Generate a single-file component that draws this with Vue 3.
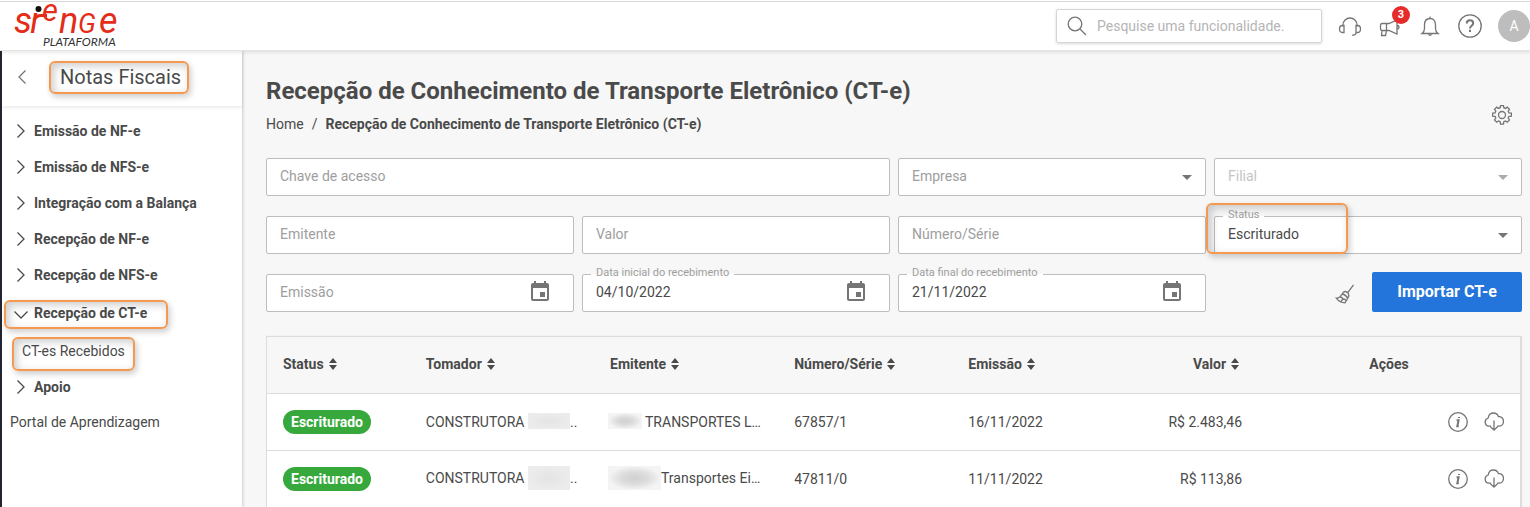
<template>
  <div class="app">
    <header class="topbar">
      <a href="#" class="logo" aria-label="Sienge Plataforma">
        <svg width="104" height="44" viewBox="0 0 104 44">
          <text class="logo-name" y="29"><tspan x="-1">s</tspan><tspan x="15">ı</tspan><tspan x="27" y="17" class="logo-raised">e</tspan><tspan x="44" y="29">n</tspan><tspan x="63" class="logo-cap">G</tspan><tspan x="84">e</tspan></text>
          <path class="logo-link" d="M19 16c1.500-3 3.500-4.500 7-4.500h6" />
          <circle cx="23.500" cy="5" r="3" fill="#111" />
          <text class="logo-sub" x="28" y="42">PLATAFORMA</text>
        </svg>
      </a>

      <div class="topbar-tools">
        <label class="search">
          <svg width="20" height="20" viewBox="0 0 20 20" class="line">
            <circle cx="8" cy="8" r="6.800" />
            <path d="M13 13l6 6" />
          </svg>
          <input type="text" placeholder="Pesquise uma funcionalidade." aria-label="Pesquise uma funcionalidade">
        </label>
        <button type="button" class="icon-btn" aria-label="Suporte">
          <svg width="24" height="24" viewBox="0 0 24 24" class="line">
            <path d="M5 12.500V11a7 7 0 0 1 14 0V12.500" />
            <path d="M6 11.500v7H4.500c-2 0-3-1.300-3-3.500s1-3.500 3-3.500zM18 11.500v7h1.500c2 0 3-1.300 3-3.500s-1-3.500-3-3.500zM18 18.500c0 2-1.300 2.700-4 2.700" />
          </svg>
        </button>
        <button type="button" class="icon-btn" aria-label="Novidades">
          <svg width="24" height="24" viewBox="0 0 24 24" class="line">
            <path d="M4.500 9.500h6.500l8-3.500v14l-8-3.500H4.500c-2 0-2-1-2-3.500s0-3.500 2-3.500zM8.500 9.500v7M19 11.500c2.600 0 2.600 3.500 0 3.500M4 16.500L3.500 21.500h4L8.500 16.500" />
          </svg>
          <span class="badge">3</span>
        </button>
        <button type="button" class="icon-btn" aria-label="Notificações">
          <svg width="24" height="24" viewBox="0 0 24 24" class="line">
            <path d="M4 19.500h16c-1.600-1.200-2.500-2.500-2.500-5v-3.500c0-4-2-6.500-5.500-6.500s-5.500 2.500-5.500 6.500v3.500c0 2.500-.9 3.800-2.500 5zM12 2.500v2M10.500 20.500c.6 1.100 2.400 1.100 3 0" />
          </svg>
        </button>
        <button type="button" class="icon-btn" aria-label="Ajuda">
          <svg width="24" height="24" viewBox="0 0 24 24" class="line">
            <circle cx="12" cy="12" r="11.200" />
            <path class="thick" d="M8.800 9.500c0-2 1.300-3.200 3.200-3.200s3.200 1.200 3.200 2.900c0 2.500-3.200 2.500-3.200 5.200M12 15.800v2.200" />
          </svg>
        </button>
        <button type="button" class="avatar">A</button>
      </div>
    </header>

    <div class="body">
      <aside class="sidebar">
        <div class="sidebar-head">
          <button type="button" class="back" aria-label="Voltar">
            <svg width="8" height="14" viewBox="0 0 8 14" class="line"><path d="M7.500 .5L1 7l6.500 6.500" /></svg>
          </button>
          <h2 class="marked marked-title">Notas Fiscais</h2>
        </div>
        <nav>
          <ul class="menu">
            <li v-for="item in menu" :key="item.label">
              <button type="button" class="menu-item" :class="{ 'marked marked-group': item.children }">
                <svg v-if="item.children" class="line chevron open" width="14" height="8" viewBox="0 0 14 8"><path d="M.5 .5L7 7L13.500 .5" /></svg>
                <svg v-else class="line chevron" width="8" height="14" viewBox="0 0 8 14"><path d="M.5 .5L7 7L.5 13.500" /></svg>
                {{ item.label }}
              </button>
              <a v-for="child in item.children" :key="child" href="#" class="submenu-item marked marked-child">{{ child }}</a>
            </li>
            <li><a href="#" class="menu-link">Portal de Aprendizagem</a></li>
          </ul>
        </nav>
      </aside>

      <main class="content">
        <div class="page-head">
          <div>
            <h1>Recepção de Conhecimento de Transporte Eletrônico (CT-e)</h1>
            <div class="breadcrumb">
              <a href="#">Home</a>
              <span>/</span>
              <strong>Recepção de Conhecimento de Transporte Eletrônico (CT-e)</strong>
            </div>
          </div>
          <button type="button" class="icon-btn gear" aria-label="Configurações">
            <svg width="20" height="20" viewBox="0 0 20 20" class="line">
              <circle cx="10" cy="10" r="3.500" />
              <path d="M8.200 2.700L8.500 .6h3l.3 2.100 1.700 .7 1.800-1.300 2.200 2.200-1.300 1.800 .7 1.700 2.500 .3v3l-2.500 .3-.7 1.700 1.300 1.900-2.200 2.200-1.800-1.300-1.700 .7-.3 2.500h-3l-.3-2.500-1.700-.7-1.800 1.300-2.200-2.200 1.300-1.900-.7-1.700-2.500-.3v-3l2.500-.3 .7-1.700-1.300-1.800 2.200-2.200 1.800 1.300z" />
            </svg>
          </button>
        </div>

        <form class="filters" @submit.prevent>
          <div
            v-for="field in fields"
            :key="field.id"
            class="field"
            :class="{ wide: field.wide, filled: field.value, disabled: field.disabled, 'marked marked-field': field.id === 'status' }"
          >
            <select v-if="field.type === 'select'" :id="field.id" v-model="field.value" :disabled="field.disabled">
              <option value=""></option>
              <option v-if="field.value">{{ field.value }}</option>
            </select>
            <input v-else :id="field.id" v-model="field.value" type="text">
            <label :for="field.id">{{ field.label }}</label>
            <svg v-if="field.type === 'select'" class="caret" width="10" height="5" viewBox="0 0 10 5"><path d="M0 0h10L5 5z" /></svg>
            <button v-if="field.type === 'date'" type="button" class="calendar" :aria-label="'Abrir calendário: ' + field.label">
              <svg width="24" height="24" viewBox="0 0 24 24">
                <path d="M17 12h-5v5h5v-5zM16 1v2H8V1H6v2H5c-1.100 0-2 .9-2 2v14c0 1.100.9 2 2 2h14c1.100 0 2-.9 2-2V5c0-1.100-.9-2-2-2h-1V1h-2zm3 18H5V8h14v11z" />
              </svg>
            </button>
          </div>
          <div class="filter-actions">
            <button type="button" class="icon-btn" aria-label="Limpar filtros">
              <svg width="20" height="20" viewBox="0 0 20 20" class="line">
                <path d="M18.500 .8L12.800 8.600M8.300 8.200c1.700-1.200 3.800-.4 5 1.200.9 1.600.5 3.200-.4 4.600L10 18.800c-3.200 0-6.600-1.800-8.600-4.600 3.100.4 5-2.700 6.900-6zM7.300 10c2 .4 4 1.700 5.300 4.200M5.300 13c1.200 .3 2.200 1 2.800 2l-2 2.200M8.100 15c1.300 0 2.300.6 3 1.700" />
              </svg>
            </button>
            <button type="submit" class="primary">Importar CT-e</button>
          </div>
        </form>

        <div class="table-wrap">
          <table>
            <colgroup>
              <col class="col-status">
              <col class="col-name">
              <col class="col-name">
              <col class="col-number">
              <col class="col-date">
              <col class="col-value">
              <col>
            </colgroup>
            <thead>
              <tr>
                <th v-for="column in columns" :key="column" :class="{ right: column === 'Valor' }">
                  <button type="button" class="sort">
                    {{ column }}
                    <svg width="8" height="12" viewBox="0 0 8 12"><path d="M0 5L4 0L8 5zM0 7H8L4 12z" /></svg>
                  </button>
                </th>
                <th class="center">Ações</th>
              </tr>
            </thead>
            <tbody>
              <tr v-for="row in rows" :key="row.numero">
                <td><span class="status">{{ row.status }}</span></td>
                <td>CONSTRUTORA <span class="redacted medium" :class="{ tall: row.tall }"></span>..</td>
                <td class="issuer"><span class="redacted dark" :class="row.tall ? 'large tall' : 'small'"></span>{{ row.emitente }}</td>
                <td>{{ row.numero }}</td>
                <td>{{ row.emissao }}</td>
                <td class="right">{{ row.valor }}</td>
                <td>
                  <div class="row-actions">
                    <button type="button" class="icon-btn" aria-label="Informações">
                      <svg width="20" height="20" viewBox="0 0 20 20" class="line">
                        <circle cx="10" cy="10" r="9.300" />
                        <path class="thick" d="M8.600 8.200h2L9.300 14.300h1.500M11 5v1" />
                      </svg>
                    </button>
                    <button type="button" class="icon-btn" aria-label="Baixar">
                      <svg width="20" height="20" viewBox="0 0 20 20" class="line">
                        <path d="M7 14.200H4.800a4.200 4.200 0 0 1-.6-8.200C4.600 3 6.700 1 9.500 1c2.400 0 4.200 1.400 4.900 3.600 2.800-.4 5.100 1.700 5.100 4.700 0 2.900-2 4.900-4.600 4.900H13M10 8.500v9.500M6.500 14.700L10 18.200l3.500-3.500" />
                      </svg>
                    </button>
                  </div>
                </td>
              </tr>
            </tbody>
          </table>
        </div>
      </main>
    </div>
  </div>
</template>

<script setup>
import { ref } from 'vue'

const menu = [
  { label: 'Emissão de NF-e' },
  { label: 'Emissão de NFS-e' },
  { label: 'Integração com a Balança' },
  { label: 'Recepção de NF-e' },
  { label: 'Recepção de NFS-e' },
  { label: 'Recepção de CT-e', children: ['CT-es Recebidos'] },
  { label: 'Apoio' }
]

const fields = ref([
  { id: 'chave', label: 'Chave de acesso', value: '', wide: true },
  { id: 'empresa', label: 'Empresa', value: '', type: 'select' },
  { id: 'filial', label: 'Filial', value: '', type: 'select', disabled: true },
  { id: 'emitente', label: 'Emitente', value: '' },
  { id: 'valor', label: 'Valor', value: '' },
  { id: 'numero', label: 'Número/Série', value: '' },
  { id: 'status', label: 'Status', value: 'Escriturado', type: 'select' },
  { id: 'emissao', label: 'Emissão', value: '', type: 'date' },
  { id: 'data-inicial', label: 'Data inicial do recebimento', value: '04/10/2022', type: 'date' },
  { id: 'data-final', label: 'Data final do recebimento', value: '21/11/2022', type: 'date' }
])

const columns = ['Status', 'Tomador', 'Emitente', 'Número/Série', 'Emissão', 'Valor']

const rows = [
  {
    status: 'Escriturado',
    emitente: 'TRANSPORTES L…',
    numero: '67857/1',
    emissao: '16/11/2022',
    valor: 'R$ 2.483,46'
  },
  {
    status: 'Escriturado',
    emitente: 'Transportes Ei…',
    tall: true,
    numero: '47811/0',
    emissao: '11/11/2022',
    valor: 'R$ 113,86'
  }
]
</script>

<style>
body {
  background: #f7f7f7;
}
</style>

<style scoped>
.app {
  display: flex;
  flex-direction: column;
  min-height: 100vh;
  font-family: Roboto, "Liberation Sans", sans-serif;
  font-size: 14px;
  line-height: 20px;
  color: #4a4a4a;
}

.app *,
.app *::after {
  box-sizing: border-box;
}

button,
input,
select {
  font: inherit;
  color: inherit;
  border: 0;
  padding: 0;
  margin: 0;
  background: none;
}

button {
  cursor: pointer;
}

a {
  color: inherit;
  text-decoration: none;
}

svg {
  display: block;
  flex: none;
  fill: #757575;
}

.line {
  fill: none;
  stroke: #757575;
  stroke-width: 1.3;
}

.thick {
  stroke-width: 2;
}

.icon-btn {
  position: relative;
  display: flex;
  align-items: center;
  justify-content: center;
}

/* Top bar */
.topbar {
  position: relative;
  z-index: 2;
  display: flex;
  justify-content: space-between;
  height: 51px;
  padding-top: 1px;
  background: #fff;
  border-bottom: 1px solid #e4e4e4;
  box-shadow: 0 1px 4px rgba(0, 0, 0, 0.12);
}

.topbar::before {
  content: '';
  position: absolute;
  top: 1px;
  left: 0;
  right: 0;
  height: 1px;
  background: #d8d8d8;
}

.logo {
  padding: 3px 0 0 15px;
}

.logo svg {
  overflow: visible;
}

.logo-name {
  fill: #e42c18;
  font-size: 36px;
  font-style: italic;
}

.logo-raised {
  font-size: 31px;
}

.logo-cap {
  font-size: 27px;
}

.logo-link {
  fill: none;
  stroke: #e42c18;
  stroke-width: 3;
}

.logo-sub {
  fill: #333;
  font-family: Lato, sans-serif;
  font-size: 12px;
  font-style: italic;
}

.topbar-tools {
  display: flex;
  align-items: center;
  gap: 16px;
}

.search {
  display: flex;
  align-items: center;
  gap: 10px;
  width: 266px;
  height: 34px;
  padding: 0 10px;
  border: 1px solid #d5d5d5;
  border-radius: 2px;
  box-shadow: 0 1px 3px rgba(0, 0, 0, 0.15);
}

.search input {
  flex: 1;
  min-width: 0;
  outline: 0;
}

.search input::placeholder {
  color: #b5b5b5;
  opacity: 1;
}

.badge {
  position: absolute;
  top: -8px;
  right: -8px;
  width: 18px;
  height: 18px;
  border-radius: 50%;
  background: #e52b2b;
  color: #fff;
  font-size: 11px;
  line-height: 18px;
  font-weight: 700;
}

.avatar {
  width: 32px;
  height: 32px;
  border-radius: 50%;
  background: #bdbdbd;
  color: #fff;
}

/* Orange callouts */
.marked {
  position: relative;
}

.marked::after {
  content: '';
  position: absolute;
  border: 2px solid #f4994f;
  border-radius: 6px;
  box-shadow: 2px 3px 6px rgba(0, 0, 0, 0.2), inset 3px 3px 8px rgba(0, 0, 0, 0.2);
  pointer-events: none;
}

.marked-title::after {
  inset: -2px -8px -3px -11px;
}

.marked-group::after {
  inset: 7px 74px 4px 2px;
}

.marked-child::after {
  inset: 4px 107px -2px 10px;
}

.marked-field::after {
  inset: -13px 174px 0 -8px;
}

/* Sidebar */
.body {
  display: flex;
  flex: 1;
}

.sidebar {
  flex: none;
  width: 242px;
  background: #fff;
  border-left: 2px solid #22252f;
  box-shadow: 1px 0 3px rgba(0, 0, 0, 0.18);
}

.sidebar-head {
  display: flex;
  align-items: center;
  gap: 34px;
  height: 55px;
  padding: 0 16px 3px;
  box-shadow: 0 2px 3px rgba(0, 0, 0, 0.08);
}

h2 {
  margin: 0;
  font-size: 20px;
  line-height: 28px;
  font-weight: 400;
}

.menu {
  margin: 0;
  padding: 7px 0 0;
  list-style: none;
}

.menu-item {
  display: flex;
  align-items: center;
  gap: 9px;
  width: 100%;
  height: 36px;
  padding-left: 15px;
  font-weight: 700;
}

.menu-item.marked-group {
  height: 40px;
}

.chevron {
  stroke: #4a4a4a;
}

.chevron.open {
  margin: 4px -3px 0;
}

.submenu-item,
.menu-link {
  display: flex;
  align-items: center;
  height: 36px;
  padding-left: 20px;
}

.menu-link {
  height: 34px;
  padding-left: 8px;
}

/* Page */
.content {
  flex: 1;
  min-width: 0;
  padding: 24px 8px 0 24px;
}

.page-head {
  display: flex;
  align-items: flex-end;
  justify-content: space-between;
  margin-bottom: 22px;
}

h1 {
  margin: 0 0 7px;
  font-size: 24px;
  line-height: 32px;
  font-weight: 700;
}

.breadcrumb {
  display: flex;
  gap: 8px;
}

.gear {
  width: 40px;
  height: 38px;
}

.filters {
  display: grid;
  grid-template-columns: repeat(4, 1fr);
  grid-auto-rows: 40px;
  align-items: end;
  gap: 18px 8px;
  margin-bottom: 24px;
}

.field {
  position: relative;
  height: 38px;
}

.wide {
  grid-column: span 2;
}

.field input,
.field select {
  width: 100%;
  height: 100%;
  padding: 0 13px 2px;
  background: #fff;
  border: 1px solid #bdbdbd;
  border-radius: 2px;
  appearance: none;
  opacity: 1;
}

.field label {
  position: absolute;
  top: 8px;
  left: 14px;
  color: #9e9e9e;
  pointer-events: none;
}

.field.filled label {
  top: -7px;
  left: 9px;
  padding: 0 5px;
  background: linear-gradient(#f7f7f7 7px, #fff 7px);
  font-size: 11px;
  line-height: 12px;
}

.caret {
  position: absolute;
  top: 17px;
  right: 14px;
}

.disabled label,
.disabled .caret {
  opacity: 0.6;
}

.calendar {
  position: absolute;
  top: 6px;
  right: 22px;
}

.filter-actions {
  display: flex;
  align-items: center;
  justify-content: flex-end;
  gap: 17px;
}

.filter-actions .icon-btn {
  height: 38px;
  padding-top: 4px;
}

.primary {
  height: 40px;
  padding: 0 25px;
  background: #2374db;
  border-radius: 2px;
  color: #fff;
  font-size: 16px;
  font-weight: 700;
}

/* Table */
.table-wrap {
  padding-right: 1px;
}

table {
  width: 100%;
  table-layout: fixed;
  border-collapse: separate;
  border-spacing: 0;
  border: 1px solid #dcdcdc;
  border-bottom: 0;
  box-shadow: 1px 0 1px rgba(0, 0, 0, 0.1);
}

.col-status {
  width: 11.4%;
}

.col-name {
  width: 14.7%;
}

.col-number {
  width: 13.9%;
}

.col-date {
  width: 12%;
}

.col-value {
  width: 12.4%;
}

th,
td {
  height: 57px;
  padding: 0 16px;
  text-align: left;
  white-space: nowrap;
  border-bottom: 1px solid #dcdcdc;
}

th {
  padding-bottom: 2px;
}

td {
  background: #fff;
}

tbody tr:last-child td {
  height: 56px;
  border-bottom: 0;
}

th.center {
  text-align: center;
}

th.right,
td.right {
  text-align: right;
}

th.right {
  padding-right: 19px;
}

.sort {
  display: inline-flex;
  align-items: center;
  gap: 5px;
  font-weight: 700;
}

.sort svg {
  fill: #4a4a4a;
}

.status {
  display: inline-block;
  padding: 0 8px;
  border-radius: 12px;
  background: #37a93c;
  color: #fff;
  font-weight: 700;
  line-height: 24px;
}

.redacted {
  display: inline-block;
  height: 16px;
  margin: -4px 0 0;
  vertical-align: middle;
  background: radial-gradient(closest-side, #e4e4e4, #ececec);
}

.redacted.dark {
  background: radial-gradient(closest-side, #d0d0d0, #dcdcdc 50%, #f4f4f4);
}

.redacted.tall {
  height: 24px;
}

.medium {
  width: 42px;
}

.small {
  width: 34px;
  margin-right: 3px;
}

.large {
  width: 53px;
}

td.issuer {
  padding-left: 14px;
}

.row-actions {
  display: flex;
  justify-content: flex-end;
  gap: 16px;
}
</style>
